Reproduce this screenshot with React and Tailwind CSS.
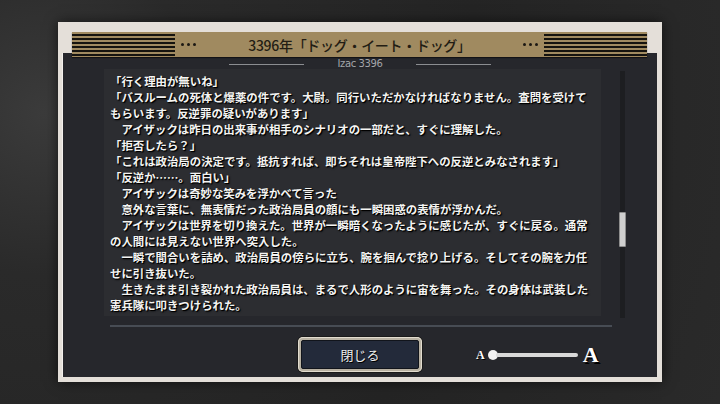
import React from 'react'

const lines = [
  '「行く理由が無いね」',
  '「バスルームの死体と爆薬の件です。大尉。同行いただかなければなりません。査問を受けて',
  'もらいます。反逆罪の疑いがあります」',
  '　アイザックは昨日の出来事が相手のシナリオの一部だと、すぐに理解した。',
  '「拒否したら？」',
  '「これは政治局の決定です。抵抗すれば、即ちそれは皇帝陛下への反逆とみなされます」',
  '「反逆か……。面白い」',
  '　アイザックは奇妙な笑みを浮かべて言った',
  '　意外な言葉に、無表情だった政治局員の顔にも一瞬困惑の表情が浮かんだ。',
  '　アイザックは世界を切り換えた。世界が一瞬暗くなったように感じたが、すぐに戻る。通常',
  'の人間には見えない世界へ突入した。',
  '　一瞬で間合いを詰め、政治局員の傍らに立ち、腕を掴んで捻り上げる。そしてその腕を力任',
  'せに引き抜いた。',
  '　生きたまま引き裂かれた政治局員は、まるで人形のように宙を舞った。その身体は武装した',
  '憲兵隊に叩きつけられた。',
]

const Stripes = () => (
  <div className="w-[103px] h-full bg-[repeating-linear-gradient(to_bottom,#a08a60_0px,#a08a60_2px,#15130f_2px,#15130f_4px)]" />
)

const Dots = () => (
  <div className="flex gap-[3px] mx-[6px]">
    <span className="w-[3px] h-[3px] rounded-full bg-[#1b1813]" />
    <span className="w-[3px] h-[3px] rounded-full bg-[#1b1813]" />
    <span className="w-[3px] h-[3px] rounded-full bg-[#1b1813]" />
  </div>
)

export default function App() {
  return (
    <div className="w-[720px] h-[404px] overflow-hidden bg-[radial-gradient(circle_at_6%_28%,#3b3b3b_0%,#2a2a2a_22%,#242424_60%,#2a2a2a_100%)] pt-[22px] pl-[58px] font-['Noto_Sans_CJK_JP',sans-serif]">
      {/* frame */}
      <div className="w-[604px] h-[360px] bg-[#e4dfd9] pt-[10px] pl-[4px] pr-[5px] pb-[5px] flex flex-col shadow-[0_0_12px_rgba(0,0,0,0.6)]">
        {/* title bar */}
        <div className="relative z-10 mx-[10px] h-[25px] bg-[#a08a60] flex items-center shadow-[0_1px_1px_rgba(0,0,0,0.5)]">
          <Stripes />
          <Dots />
          <div className="flex-1 text-center text-[14px] leading-none font-medium text-[#231d14] tracking-[-0.3px]">
            3396年「ドッグ・イート・ドッグ」
          </div>
          <Dots />
          <Stripes />
        </div>

        {/* dark panel */}
        <div className="-mt-[4px] flex-1 bg-[#26272c] border-l border-[#f3f0ec] flex flex-col pt-[6px]">
          <div className="h-[10px] flex items-center justify-center">
            <div className="w-[75px] h-px bg-[#8b8d91]" />
            <span className="mx-[34px] text-[10px] leading-none text-[#a3a5a9] font-['DejaVu_Sans',sans-serif] tracking-[-0.4px]">Izac 3396</span>
            <div className="w-[75px] h-px bg-[#8b8d91]" />
          </div>

          <div className="flex h-[247px] pl-[41px]">
            <div className="w-[497px] h-full bg-[#2c2d31] pl-[6px] pt-[4px] text-[11.4px] leading-[16px] font-bold text-[#f4f4f2] [text-shadow:1px_1px_0_#000,1px_1px_2px_#000]">
              {lines.map((l, i) => (
                <div key={i} className="whitespace-nowrap">{l}</div>
              ))}
            </div>
            <div className="ml-[19px] mt-[2px] w-[5px] h-[247px] bg-[#1d1e21] relative">
              <div className="absolute top-[141px] left-[-1px] w-[7px] h-[35px] rounded-[1px] bg-[#cfcfcf] border border-[#8e8e8e]" />
            </div>
          </div>

          <div className="mt-[9px] ml-[47px] w-[502px] h-[2px] bg-[#474c54]" />

          <div className="mt-[10px] grid grid-cols-[1fr_124px_1fr] items-center">
            <div />
            <button className="h-[35px] rounded-[5px] bg-[#b9b2a3] p-[3px] shadow-[0_0_0_1px_#1a1a1a,inset_0_0_0_1px_#e2dccf]">
              <div className="h-full rounded-[2px] bg-[#232a3a] border border-[#11141b] flex items-center justify-center text-[13px] text-[#eeeeee] [text-shadow:1px_1px_0_#000]">
                閉じる
              </div>
            </button>
            <div className="flex items-center pl-[54px]">
              <span className="font-['Liberation_Serif',serif] font-bold text-[12px] leading-none text-white [text-shadow:1px_1px_0_#000]">A</span>
              <div className="ml-[3px] flex items-center w-[90px]">
                <div className="w-[10px] h-[10px] rounded-full bg-[#f2f2f2] shrink-0" />
                <div className="-ml-[2px] h-[4px] flex-1 rounded-full bg-[#d9d9d9]" />
              </div>
              <span className="ml-[5px] font-['Liberation_Serif',serif] font-bold text-[22px] leading-none text-white [text-shadow:2px_2px_0_#000]">A</span>
            </div>
          </div>
        </div>
      </div>
    </div>
  )
}
